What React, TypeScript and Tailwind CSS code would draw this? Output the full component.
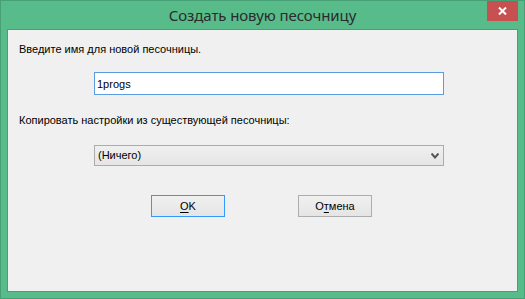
import { useState } from 'react'

export default function App() {
  const [name, setName] = useState('1progs')

  return (
    <div className="w-[525px] h-[299px] bg-[#58bb8a] border border-[#47a075] flex flex-col font-['Liberation_Sans',Arial,sans-serif]">
      {/* title bar */}
      <div className="h-[28px] px-[6px] grid grid-cols-[31px_1fr_31px] items-start">
        <div />
        <div className="h-[28px] flex items-center justify-center text-[15px] text-[#2b2b2b] font-['Noto_Sans',sans-serif] tracking-[-0.1px]">
          Создать новую песочницу
        </div>
        <div className="h-[20px] bg-[#c75050] flex items-center justify-center">
          <svg width="9" height="8" viewBox="0 0 9 8">
            <path d="M1 0.5 L8 7.5 M8 0.5 L1 7.5" stroke="#fff" strokeWidth="2" />
          </svg>
        </div>
      </div>

      {/* client area */}
      <div className="mx-[6px] h-[263px] border border-[#47a075] bg-[#f0f0f0] text-[11px] leading-[13px] text-black pt-[13px]">
        <div className="pl-[11px]">Введите имя для новой песочницы.</div>

        <input
          value={name}
          onChange={(e) => setName(e.target.value)}
          className="block mt-[16px] ml-[86px] w-[350px] h-[23px] border border-[#5b9ce0] bg-white px-[2px] text-[11px] outline-none"
        />

        <div className="pl-[11px] mt-[19px]">Копировать настройки из существующей песочницы:</div>

        <div className="mt-[18px] ml-[86px] w-[350px] h-[21px] border border-[#acacac] bg-gradient-to-b from-[#f0f0f0] to-[#e5e5e5] flex items-center pl-[3px] pr-[3px]">
          <span className="flex-1">(Ничего)</span>
          <svg width="8" height="6" viewBox="0 0 8 6" className="mr-[1px]">
            <path d="M0.5 0.5 L4 4.5 L7.5 0.5" stroke="#555" strokeWidth="2" fill="none" />
          </svg>
        </div>

        <div className="mt-[29px] ml-[143px] flex gap-[73px]">
          <button className="w-[74px] h-[22px] border border-[#3399ff] bg-gradient-to-b from-[#f0f0f0] to-[#e5e5e5] text-[11px] flex items-center justify-center">
            <span>
              <span className="underline underline-offset-2">O</span>K
            </span>
          </button>
          <button className="w-[74px] h-[22px] border border-[#adadad] bg-gradient-to-b from-[#f0f0f0] to-[#e5e5e5] text-[11px] flex items-center justify-center">
            <span>
              О<span className="underline underline-offset-2">т</span>мена
            </span>
          </button>
        </div>
      </div>
    </div>
  )
}
